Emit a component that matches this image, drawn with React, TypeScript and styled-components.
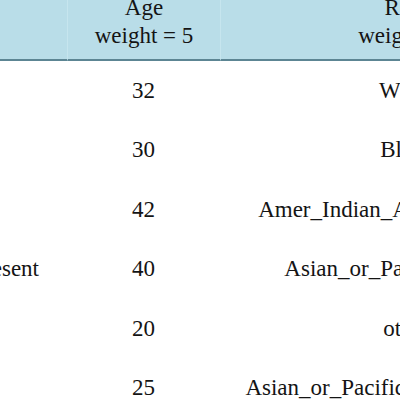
import React from "react";
import styled, { createGlobalStyle } from "styled-components";

const Global = createGlobalStyle`
  html, body {
    margin: 0;
    padding: 0;
    background: #ffffff;
    overflow: hidden;
  }
  #root {
    width: 400px;
    height: 400px;
    overflow: hidden;
  }
`;

const Table = styled.div`
  display: grid;
  grid-template-columns: 67px 153px 374px;
  width: 594px;
  margin-top: -6px;
  font-family: "Liberation Serif", "Times New Roman", serif;
  font-size: 23px;
  line-height: 28px;
  color: #141414;
`;

const HeadCell = styled.div<{ $first?: boolean }>`
  background: #b9dde8;
  border-bottom: 2px solid #5c8593;
  border-left: ${(p) => (p.$first ? "none" : "1px solid #c6e5ee")};
  padding: 0 0 9px;
  display: flex;
  flex-direction: column;
  align-items: center;
  text-align: center;
  white-space: nowrap;
`;

const Cell = styled.div<{ $align?: "center" | "right" }>`
  height: 59.5px;
  display: flex;
  align-items: center;
  justify-content: ${(p) => (p.$align === "right" ? "flex-end" : "center")};
  padding-right: ${(p) => (p.$align === "right" ? "28px" : "0")};
  white-space: nowrap;
`;

const rows = [
  { group: "", age: "32", race: "White" },
  { group: "", age: "30", race: "Black" },
  { group: "", age: "42", race: "Amer_Indian_Aleut_or_Eskimo" },
  { group: "Present", age: "40", race: "Asian_or_Pacific_Islander" },
  { group: "", age: "20", race: "other" },
  { group: "", age: "25", race: "Asian_or_Pacific_Islander or other" },
];

export default function App() {
  return (
    <>
      <Global />
      <Table>
        <HeadCell $first />
        <HeadCell>
          <span>Age</span>
          <span>weight = 5</span>
        </HeadCell>
        <HeadCell>
          <span>Race</span>
          <span>weight = 3</span>
        </HeadCell>
        {rows.map((r, i) => (
          <React.Fragment key={i}>
            <Cell $align="right">{r.group}</Cell>
            <Cell>{r.age}</Cell>
            <Cell>{r.race}</Cell>
          </React.Fragment>
        ))}
      </Table>
    </>
  );
}
